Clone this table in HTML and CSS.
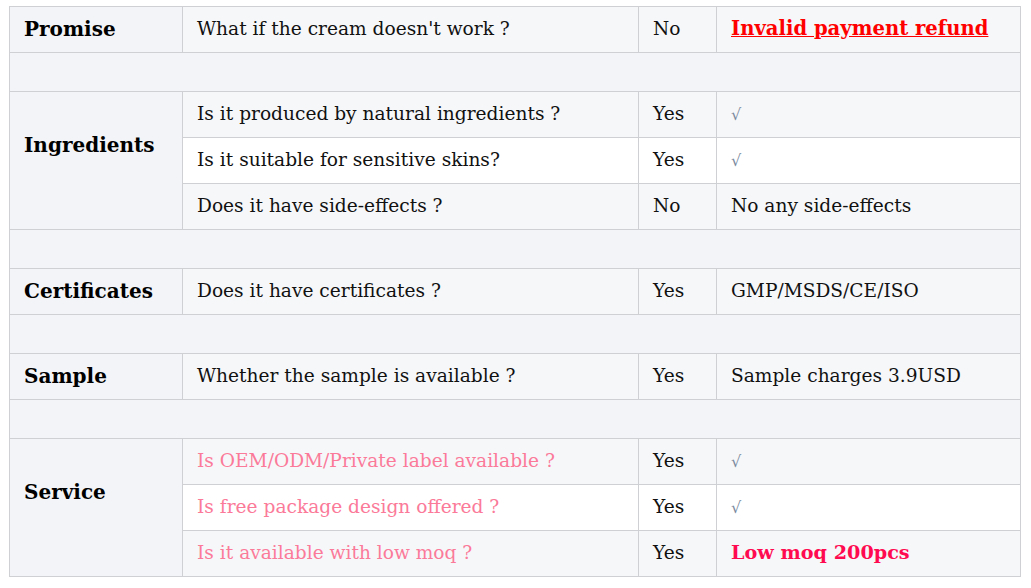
FILE: index.html
```html
<!DOCTYPE html>
<html>
<head>
<meta charset="utf-8">
<link rel="stylesheet" href="styles.css">
</head>
<body>
<table class="faq">
  <colgroup>
    <col class="c1"><col class="c2"><col class="c3"><col class="c4">
  </colgroup>
  <tbody>
    <tr class="odd">
      <th>Promise</th>
      <td>What if the cream doesn't work ?</td>
      <td>No</td>
      <td><a class="refund" href="#">Invalid payment refund</a></td>
    </tr>
    <tr class="gap"><td colspan="4"></td></tr>
    <tr class="odd">
      <th rowspan="3" class="group">Ingredients</th>
      <td>Is it produced by natural ingredients ?</td>
      <td>Yes</td>
      <td><span class="check">√</span></td>
    </tr>
    <tr class="even">
      <td>Is it suitable for sensitive skins?</td>
      <td>Yes</td>
      <td><span class="check">√</span></td>
    </tr>
    <tr class="odd">
      <td>Does it have side-effects ?</td>
      <td>No</td>
      <td>No any side-effects</td>
    </tr>
    <tr class="gap"><td colspan="4"></td></tr>
    <tr class="odd">
      <th>Certificates</th>
      <td>Does it have certificates ?</td>
      <td>Yes</td>
      <td>GMP/MSDS/CE/ISO</td>
    </tr>
    <tr class="gap"><td colspan="4"></td></tr>
    <tr class="odd">
      <th>Sample</th>
      <td>Whether the sample is available ?</td>
      <td>Yes</td>
      <td>Sample charges 3.9USD</td>
    </tr>
    <tr class="gap"><td colspan="4"></td></tr>
    <tr class="odd">
      <th rowspan="3" class="group">Service</th>
      <td class="pink">Is OEM/ODM/Private label available ?</td>
      <td>Yes</td>
      <td><span class="check">√</span></td>
    </tr>
    <tr class="even">
      <td class="pink">Is free package design offered ?</td>
      <td>Yes</td>
      <td><span class="check">√</span></td>
    </tr>
    <tr class="odd">
      <td class="pink">Is it available with low moq ?</td>
      <td>Yes</td>
      <td><strong class="moq">Low moq 200pcs</strong></td>
    </tr>
  </tbody>
</table>
</body>
</html>
```

FILE: styles.css
```css
html, body {
  margin: 0;
  padding: 0;
  background: #ffffff;
}
body {
  padding: 6px 0 0 9px;
  font-family: "DejaVu Serif", "Liberation Serif", serif;
  font-size: 18.6px;
  color: #111111;
}
.faq {
  border-collapse: collapse;
  table-layout: fixed;
  width: 1011px;
}
.c1 { width: 173px; }
.c2 { width: 456px; }
.c3 { width: 78px; }
.c4 { width: 304px; }
.faq th, .faq td {
  border: 1px solid #cfd0d3;
  padding: 1px 14px 2px;
  height: 42px;
  text-align: left;
  vertical-align: middle;
  font-weight: normal;
  line-height: 24px;
}
.faq th {
  background: #f3f4f7;
  font-weight: bold;
  font-size: 20px;
  color: #000000;
}
.faq th.group {
  padding-bottom: 32px;
}
.odd td { background: #f6f7f9; }
.even td { background: #ffffff; }
.faq .gap td {
  background: #f3f4f7;
  height: 38px;
  padding: 0;
}
.refund {
  color: #ff0000;
  font-weight: bold;
  font-size: 19.6px;
  text-decoration: underline;
}
.check {
  color: #7a8aa0;
  font-size: 16px;
}
.pink { color: #fb7a99; }
.moq {
  color: #ff0a50;
  font-weight: bold;
  font-size: 19.2px;
}
```
